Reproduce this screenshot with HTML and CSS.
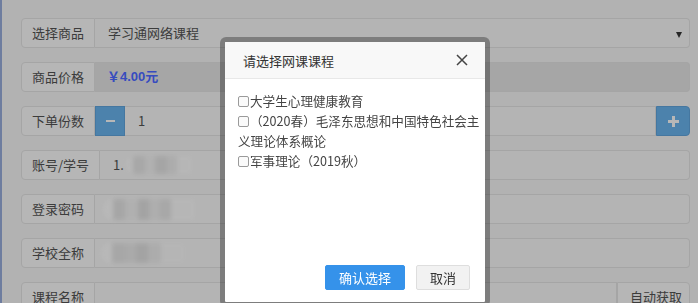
FILE: index.html
```html
<!DOCTYPE html>
<html lang="zh-CN">
<head>
<meta charset="utf-8">
<title>选择网课课程</title>
<link rel="stylesheet" href="styles.css">
</head>
<body>
<div class="page">
  <div class="form">
    <div class="row">
      <span class="addon">选择商品</span>
      <div class="field select">学习通网络课程<span class="caret"></span></div>
    </div>
    <div class="row">
      <span class="addon">商品价格</span>
      <div class="field readonly"><b class="price">￥4.00元</b></div>
    </div>
    <div class="row">
      <span class="addon">下单份数</span>
      <span class="btn-blue minus"><span class="bar"></span></span>
      <div class="field">1</div>
      <span class="btn-blue plus"><svg width="11" height="11" viewBox="0 0 11 11"><path d="M4 0h3v4h4v3H7v4H4V7H0V4h4z" fill="#f4f4f4"/></svg></span>
    </div>
    <div class="row">
      <span class="addon">账号/学号</span>
      <div class="field">1.<span class="blob b1"></span></div>
    </div>
    <div class="row">
      <span class="addon">登录密码</span>
      <div class="field"><span class="blob b2"></span></div>
    </div>
    <div class="row">
      <span class="addon">学校全称</span>
      <div class="field"><span class="blob b3"></span></div>
    </div>
    <div class="row">
      <span class="addon">课程名称</span>
      <div class="field"></div>
      <span class="addon end">自动获取</span>
    </div>
  </div>
</div>
<div class="backdrop"></div>
<div class="modal">
  <div class="modal-head">
    <span class="modal-title">请选择网课课程</span>
    <svg class="close" width="12" height="12" viewBox="0 0 12 12"><path d="M1 1L11 11M11 1L1 11" stroke="#444" stroke-width="1.5" fill="none"/></svg>
  </div>
  <div class="modal-body">
    <div class="item"><span class="check"></span>大学生心理健康教育</div>
    <div class="item"><span class="check"></span>（2020春）毛泽东思想和中国特色社会主义理论体系概论</div>
    <div class="item"><span class="check"></span>军事理论（2019秋）</div>
  </div>
  <div class="modal-foot">
    <span class="btn btn-ok">确认选择</span>
    <span class="btn btn-cancel">取消</span>
  </div>
</div>
</body>
</html>
```
FILE: styles.css
```css
html, body {
  margin: 0;
  padding: 0;
  height: 100%;
  overflow: hidden;
}
body {
  font-family: "Noto Sans CJK SC", "Liberation Sans", sans-serif;
  font-size: 13px;
  color: #505050;
  background: #eeeeee;
}
.page {
  height: 100%;
  box-sizing: border-box;
  border-left: 2px solid #93a7d5;
  padding: 18px 8px 0 19px;
}
.form {
  display: flex;
  flex-direction: column;
  gap: 14px;
}
.row {
  display: flex;
  height: 30px;
}
.addon {
  box-sizing: border-box;
  height: 30px;
  line-height: 28px;
  padding: 0 10px;
  border: 1px solid #dcdcdc;
  background: #f3f3f3;
  border-radius: 4px 0 0 4px;
  white-space: nowrap;
}
.addon.end {
  border-radius: 0 4px 4px 0;
  border-left: 1px solid #dcdcdc;
  width: 73px;
  padding: 0 0 0 12px;
}
.field {
  flex: 1;
  box-sizing: border-box;
  height: 30px;
  line-height: 28px;
  border: 1px solid #dcdcdc;
  border-left: none;
  background: #f1f1f1;
  padding-left: 13px;
  display: flex;
  align-items: center;
  border-radius: 0 4px 4px 0;
}
.row .field:not(:last-child) {
  border-radius: 0;
}
.select {
  position: relative;
}
.caret {
  position: absolute;
  right: 7px;
  top: 13px;
  width: 0;
  height: 0;
  border-left: 3.5px solid transparent;
  border-right: 3.5px solid transparent;
  border-top: 6px solid #333;
}
.readonly {
  background: #dedede;
  padding-left: 12px;
}
.price {
  color: #4a66ff;
  font-family: "Liberation Sans", "Noto Sans CJK SC", sans-serif;
  font-weight: bold;
}
.btn-blue {
  box-sizing: border-box;
  height: 30px;
  background: #66aee6;
  border: 1px solid #5d9fd6;
  display: flex;
  align-items: center;
  justify-content: center;
}
.minus {
  width: 30px;
}
.minus .bar {
  width: 9px;
  height: 2px;
  background: #f4f4f4;
}
.plus {
  width: 34px;
  border-radius: 0 4px 4px 0;
}
.blob {
  display: inline-block;
  border-radius: 10px 0 0 10px;
  filter: blur(2.2px);
}
.b1 {
  width: 67px;
  height: 18px;
  margin-left: 1px;
  background:
    linear-gradient(90deg, #f4f4f4 0 12%, #e0e0e0 12% 30%, #ececec 30% 45%, #dddddd 45% 62%, #e6e6e6 62% 78%, #f3f3f3 78% 100%);
}
.b2 {
  width: 92px;
  height: 21px;
  margin-left: -5px;
  background:
    linear-gradient(90deg, #f6f6f6 0 11%, #dedede 11% 24%, #ebebeb 24% 38%, #dadada 38% 50%, #e8e8e8 50% 62%, #e0e0e0 62% 74%, #f3f3f3 74% 100%);
}
.b3 {
  width: 84px;
  height: 20px;
  margin-left: -7px;
  background:
    linear-gradient(90deg, #f6f6f6 0 13%, #dfdfdf 13% 28%, #e3e3e3 28% 42%, #dadada 42% 56%, #e6e6e6 56% 72%, #f2f2f2 72% 100%);
}
.backdrop {
  position: fixed;
  inset: 0;
  background: rgba(0, 0, 0, 0.25);
}
.modal {
  position: absolute;
  left: 220px;
  top: 37px;
  width: 270px;
  height: 270px;
  box-sizing: border-box;
  border: 5px solid rgba(0, 0, 0, 0.3);
  border-radius: 6px;
  background: #fff;
  background-clip: padding-box;
  display: flex;
  flex-direction: column;
  color: #333;
  overflow: hidden;
}
.modal-head {
  height: 36px;
  flex: none;
  background: #f8f8f8;
  border-bottom: 1px solid #e8e8e8;
  display: flex;
  align-items: center;
  justify-content: space-between;
  padding: 0 17px 0 18px;
}
.modal-title {
  font-size: 13px;
  color: #333;
}
.modal-body {
  flex: 1;
  padding: 12px 1px 0 13px;
  line-height: 20px;
  font-size: 12.6px;
  color: #444;
}
.check {
  display: inline-block;
  box-sizing: border-box;
  width: 11px;
  height: 11px;
  border: 1px solid #9a9a9a;
  border-radius: 2px;
  background: #fafafa;
  margin-right: 1px;
  vertical-align: -1px;
}
.modal-foot {
  flex: none;
  display: flex;
  justify-content: flex-end;
  gap: 11px;
  padding: 0 15px 12px;
}
.btn {
  box-sizing: border-box;
  height: 25px;
  line-height: 23px;
  padding: 0 13px;
  border-radius: 2px;
  font-size: 13px;
  border: 1px solid transparent;
}
.btn-ok {
  background: #3592ea;
  border-color: #3592ea;
  color: #fff;
}
.btn-cancel {
  background: #f2f2f2;
  border-color: #dedede;
  color: #333;
}
```
